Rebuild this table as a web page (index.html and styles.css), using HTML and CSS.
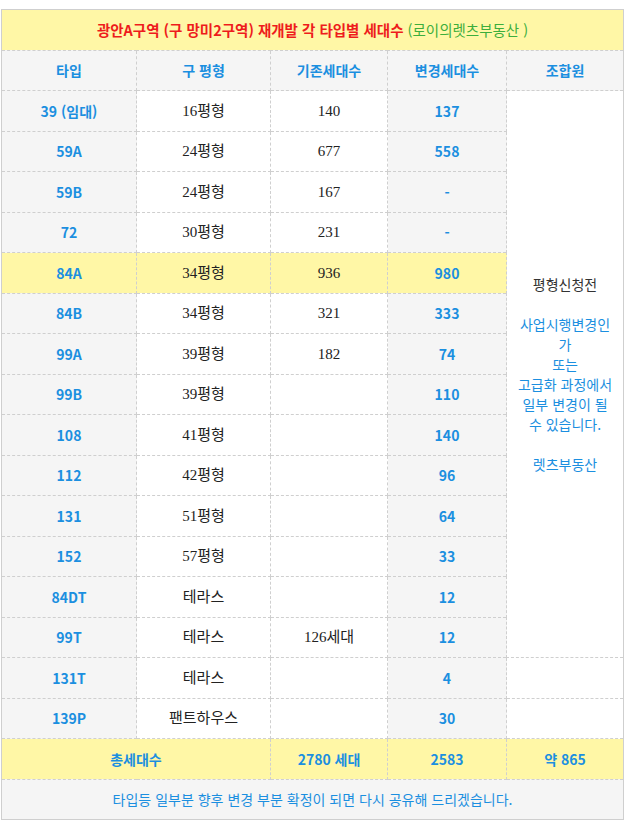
FILE: index.html
```html
<!DOCTYPE html>
<html lang="ko">
<head>
<meta charset="utf-8">
<title>광안A구역 타입별 세대수</title>
<link rel="stylesheet" href="styles.css">
</head>
<body>
<table class="units">
  <colgroup>
    <col class="c1"><col class="c2"><col class="c3"><col class="c4"><col class="c5">
  </colgroup>
  <tr class="title-row">
    <td colspan="5"><span class="red">광안A구역 (구 망미2구역) 재개발 각 타입별 세대수</span> <span class="green">(로이의렛츠부동산 )</span></td>
  </tr>
  <tr class="head-row">
    <th>타입</th><th>구 평형</th><th>기존세대수</th><th>변경세대수</th><th>조합원</th>
  </tr>
  <tr><td class="ty">39 (임대)</td><td class="pl">16평형</td><td class="pl">140</td><td class="nw">137</td>
    <td class="note" rowspan="14"><div class="note-box"><span class="dark">평형신청전</span><br><br>사업시행변경인가<br>또는<br>고급화 과정에서 일부 변경이 될 수 있습니다.<br><br>렛츠부동산</div></td></tr>
  <tr><td class="ty">59A</td><td class="pl">24평형</td><td class="pl">677</td><td class="nw">558</td></tr>
  <tr><td class="ty">59B</td><td class="pl">24평형</td><td class="pl">167</td><td class="nw">-</td></tr>
  <tr><td class="ty">72</td><td class="pl">30평형</td><td class="pl">231</td><td class="nw">-</td></tr>
  <tr class="hl"><td class="ty">84A</td><td class="pl">34평형</td><td class="pl">936</td><td class="nw">980</td></tr>
  <tr><td class="ty">84B</td><td class="pl">34평형</td><td class="pl">321</td><td class="nw">333</td></tr>
  <tr><td class="ty">99A</td><td class="pl">39평형</td><td class="pl">182</td><td class="nw">74</td></tr>
  <tr><td class="ty">99B</td><td class="pl">39평형</td><td class="pl"></td><td class="nw">110</td></tr>
  <tr><td class="ty">108</td><td class="pl">41평형</td><td class="pl"></td><td class="nw">140</td></tr>
  <tr><td class="ty">112</td><td class="pl">42평형</td><td class="pl"></td><td class="nw">96</td></tr>
  <tr><td class="ty">131</td><td class="pl">51평형</td><td class="pl"></td><td class="nw">64</td></tr>
  <tr><td class="ty">152</td><td class="pl">57평형</td><td class="pl"></td><td class="nw">33</td></tr>
  <tr><td class="ty">84DT</td><td class="pl">테라스</td><td class="pl"></td><td class="nw">12</td></tr>
  <tr><td class="ty">99T</td><td class="pl">테라스</td><td class="pl">126세대</td><td class="nw">12</td></tr>
  <tr><td class="ty">131T</td><td class="pl">테라스</td><td class="pl"></td><td class="nw">4</td><td class="pl"></td></tr>
  <tr><td class="ty">139P</td><td class="pl">팬트하우스</td><td class="pl"></td><td class="nw">30</td><td class="pl"></td></tr>
  <tr class="total-row">
    <td colspan="2">총세대수</td><td>2780 세대</td><td>2583</td><td>약 865</td>
  </tr>
  <tr class="foot-row">
    <td colspan="5">타입등 일부분 향후 변경 부분 확정이 되면 다시 공유해 드리겠습니다.</td>
  </tr>
</table>
</body>
</html>
```

FILE: styles.css
```css
html, body {
  margin: 0;
  padding: 0;
  background: #ffffff;
}

body {
  padding: 9px 3px 0 1px;
  font-family: "Noto Sans CJK KR", "Noto Sans", sans-serif;
  font-size: 14px;
  color: #222;
}

.units {
  width: 623px;
  border-collapse: collapse;
  table-layout: fixed;
  border: 1px solid #cfcfcf;
}

.c1 { width: 135px; }
.c2 { width: 134px; }
.c3 { width: 117px; }
.c4 { width: 119px; }
.c5 { width: 117px; }

.units td, .units th {
  border: 1px dashed #cfcfcf;
  text-align: center;
  vertical-align: middle;
  padding: 0 4px;
  height: 39.5px;
  line-height: 20px;
}

.title-row td {
  background: #fff7a6;
  font-weight: 700;
  font-size: 14.5px;
  border-bottom: 1px dashed #cfcfcf;
}

.red { color: #ee1c1c; }
.green { color: #3cae3c; font-weight: 400; }

.head-row th {
  background: #f5f5f5;
  color: #1b8fe0;
  font-weight: 700;
  font-size: 14px;
}

.ty, .nw {
  background: #f5f5f5;
  color: #1b8fe0;
  font-weight: 700;
}

.pl {
  background: #ffffff;
  color: #222;
  font-family: "Liberation Serif", "Noto Sans CJK KR", serif;
  font-size: 15px;
}

.hl .ty, .hl .nw, .hl .pl {
  background: #fff7a6;
}

.note {
  background: #ffffff;
  color: #1b8fe0;
  line-height: 21.6px;
}

.note-box {
  width: 96px;
  margin: 0 auto;
}

.note .dark { color: #333; }

.total-row td {
  background: #fff7a6;
  color: #1b8fe0;
  font-weight: 700;
}

.foot-row td {
  background: #f5f5f5;
  color: #1b8fe0;
  border-top: 1px dashed #cfcfcf;
}
```
